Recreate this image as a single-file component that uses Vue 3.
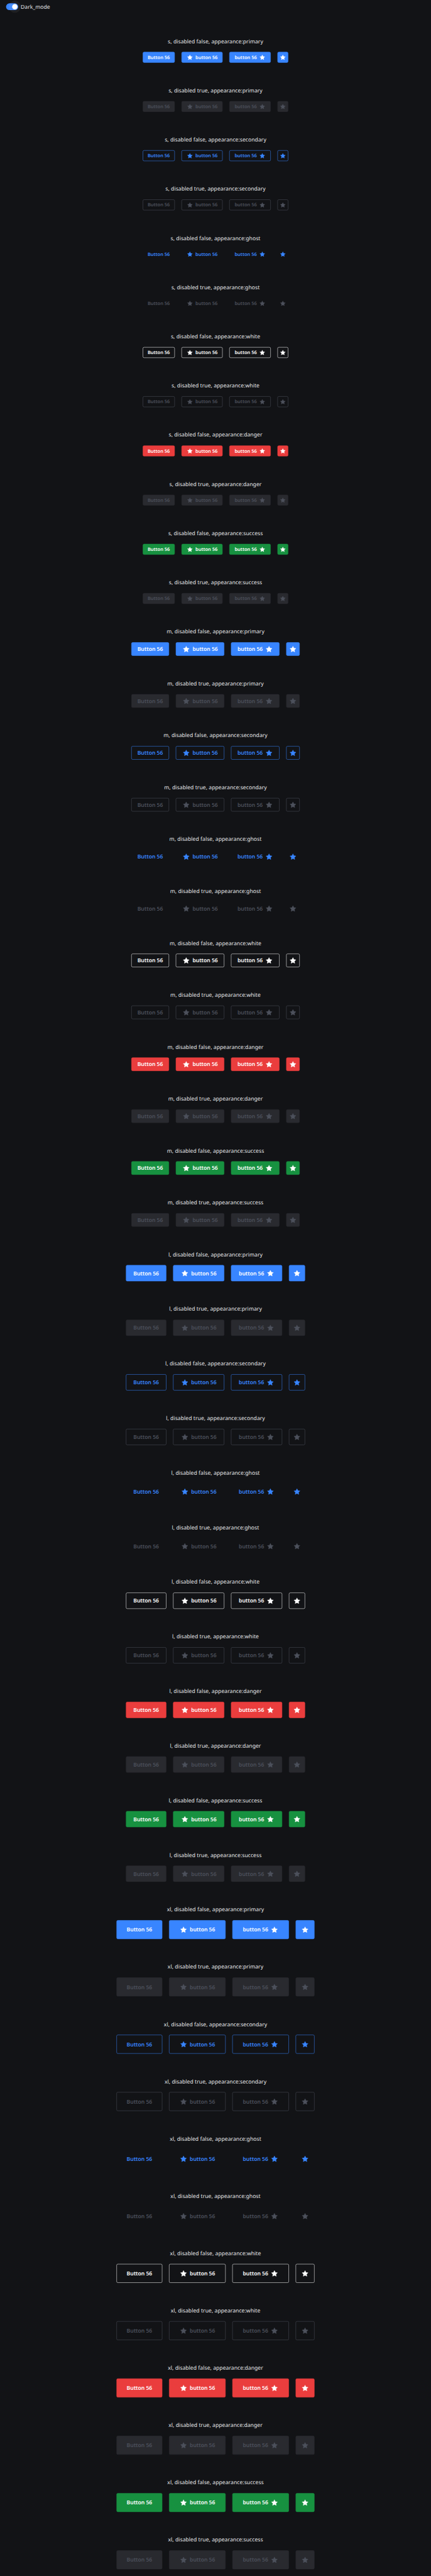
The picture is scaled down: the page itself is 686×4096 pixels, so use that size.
<script setup>
const sizes = ['s', 'm', 'l', 'xl']
const appearances = ['primary', 'secondary', 'ghost', 'white', 'danger', 'success']
const groups = sizes.flatMap(size =>
  appearances.flatMap(appearance =>
    [false, true].map(disabled => ({ size, appearance, disabled }))
  )
)
const star = 'M12 3.5L14.85 9.1L21 10.1L16.6 14.5L17.5 20.6L12 17.9L6.5 20.6L7.4 14.5L3 10.1L9.15 9.1Z'
</script>

<template>
  <div class="viewport">
    <main class="page">
      <label class="mode">
        <span class="track"><span class="halo"><span class="thumb"></span></span></span>
        <span class="mode-text">Dark_mode</span>
      </label>
      <section v-for="g in groups" :key="g.size + g.appearance + g.disabled" class="group">
        <p class="caption">{{ g.size }}, disabled {{ g.disabled }}, appearance:{{ g.appearance }}</p>
        <div class="row" :class="['size-' + g.size, g.appearance]">
          <button class="btn plain" :disabled="g.disabled"><span class="text">Button 56</span></button>
          <button class="btn wide" :disabled="g.disabled">
            <svg class="icon" viewBox="0 0 24 24"><path :d="star" /></svg>
            <span class="text">button 56</span>
          </button>
          <button class="btn wide" :disabled="g.disabled">
            <span class="text">button 56</span>
            <svg class="icon" viewBox="0 0 24 24"><path :d="star" /></svg>
          </button>
          <button class="btn square" :disabled="g.disabled">
            <svg class="icon" viewBox="0 0 24 24"><path :d="star" /></svg>
          </button>
        </div>
      </section>
    </main>
  </div>
</template>

<style>
html, body { background: #121316; }
</style>

<style scoped>
.viewport { width: 686px; height: 4096px; overflow: hidden; background: #121316; }
.page {
  width: 1280px;
  height: 7644px;
  transform: scale(0.5359375, 0.535845);
  transform-origin: 0 0;
  font-family: "Noto Sans", sans-serif;
  text-rendering: geometricPrecision;
  color: #e6e7ea;
}
.mode { display: flex; align-items: center; height: 40px; padding-left: 18px; gap: 7.5px; }
.track {
  width: 36px;
  height: 20px;
  border-radius: 10px;
  background: #3885ff;
  display: flex;
  align-items: center;
  justify-content: flex-end;
}
.halo {
  width: 36px;
  height: 36px;
  margin-right: -8px;
  flex: none;
  border-radius: 50%;
  background: rgba(255, 255, 255, 0.06);
  display: flex;
  align-items: center;
  justify-content: center;
}
.thumb { width: 16px; height: 16px; border-radius: 50%; background: #fff; }
.mode-text { font-size: 16px; line-height: 24px; letter-spacing: 0.1px; }
.group { padding-top: 70px; }
.caption {
  margin: 0 0 20px;
  font-size: 16px;
  line-height: 24px;
  letter-spacing: 0.1px;
  text-align: center;
}
.row { display: flex; justify-content: center; gap: 20px; }
.btn {
  box-sizing: border-box;
  display: flex;
  flex: none;
  align-items: center;
  justify-content: center;
  gap: 6.5px;
  margin: 0;
  padding: 0;
  height: var(--h);
  border: 1px solid var(--edge);
  border-radius: 4px;
  background: var(--fill);
  color: var(--ink);
  font-family: inherit;
  font-size: 16px;
  font-weight: 600;
  letter-spacing: -0.07px;
  text-rendering: inherit;
  white-space: nowrap;
}
.plain { width: var(--plain); }
.wide { width: var(--wide); }
.square { width: var(--h); }
.icon {
  width: 24px;
  height: 24px;
  flex: none;
  fill: currentColor;
  stroke: currentColor;
  stroke-width: 0.7;
  stroke-linejoin: round;
}
.text { flex: none; }
.size-s { --h: 32px; --plain: 94.8px; --wide: 122.6px; }
.size-m { --h: 40px; --plain: 112px; --wide: 144px; }
.size-l { --h: 48px; --plain: 120px; --wide: 152px; }
.size-xl { --h: 56px; --plain: 136px; --wide: 168px; }
.size-s .btn { font-size: 14px; gap: 6px; }
.size-s .icon { width: 20px; height: 20px; }
.primary { --fill: #3885ff; --edge: #3885ff; --ink: #fff; }
.secondary { --fill: transparent; --edge: #3885ff; --ink: #3885ff; }
.ghost { --fill: transparent; --edge: transparent; --ink: #3885ff; }
.white { --fill: transparent; --edge: #fff; --ink: #fff; }
.danger { --fill: #ea3d3d; --edge: #ea3d3d; --ink: #fff; }
.success { --fill: #179140; --edge: #179140; --ink: #fff; }
.btn:disabled { --fill: #292a2f; --edge: #292a2f; --ink: #4c505b; }
.secondary .btn:disabled, .white .btn:disabled { --fill: transparent; --edge: #4c505b; }
.ghost .btn:disabled { --fill: transparent; --edge: transparent; }
</style>
